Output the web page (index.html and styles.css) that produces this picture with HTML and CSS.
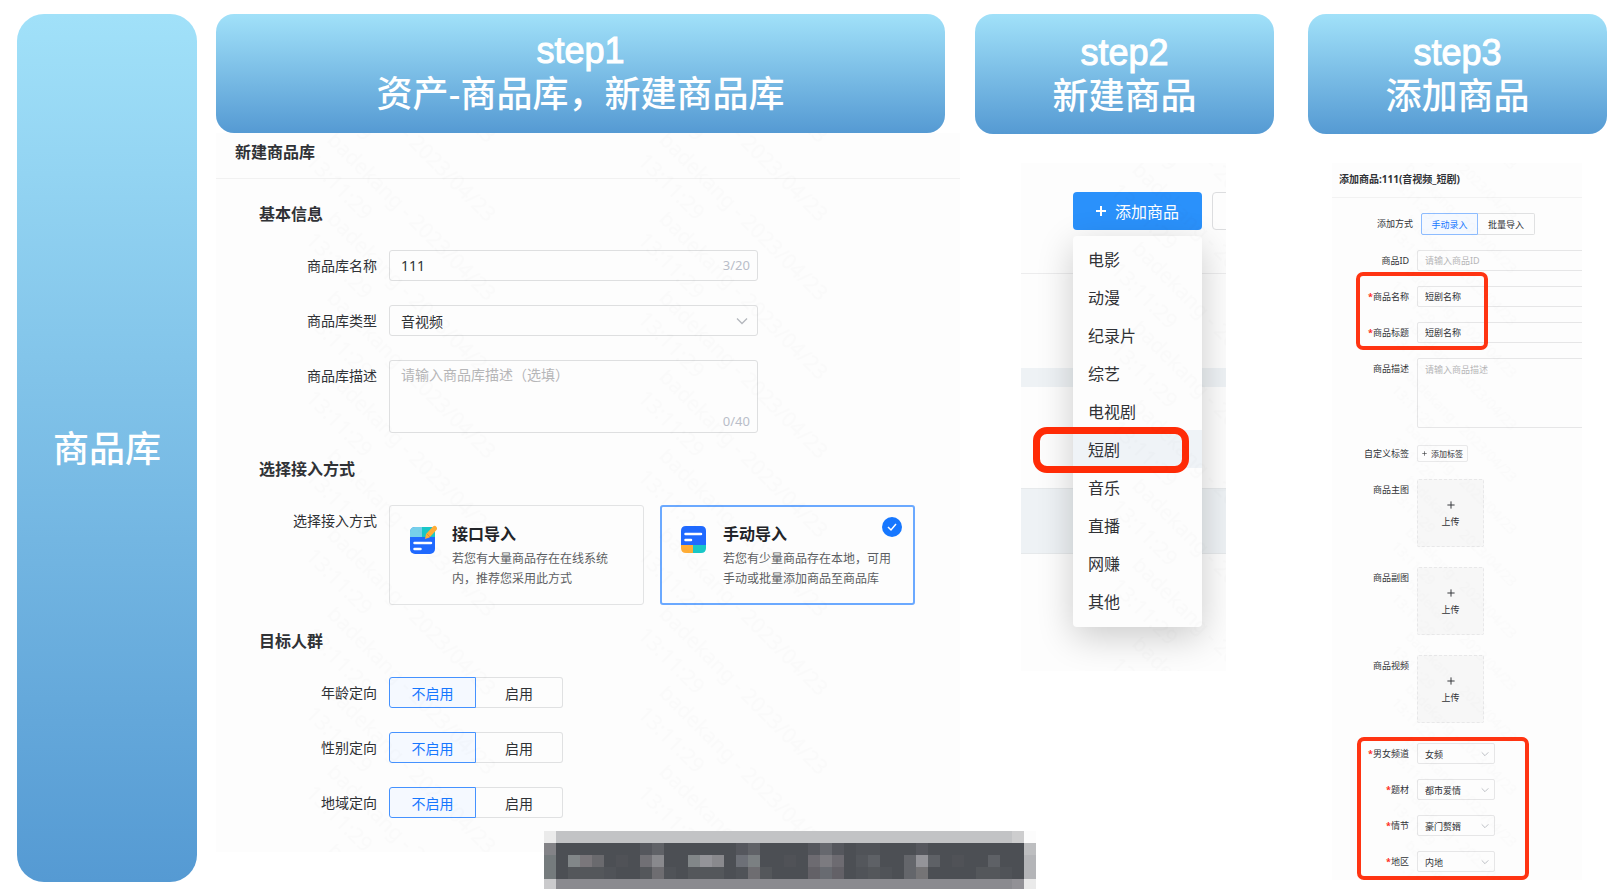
FILE: index.html
```html
<!DOCTYPE html>
<html lang="zh-CN">
<head>
<meta charset="utf-8">
<title>商品库</title>
<link rel="stylesheet" href="styles.css">
</head>
<body>
<svg class="defs" aria-hidden="true">
  <defs>
    <pattern id="mark-large" width="332" height="79" patternUnits="userSpaceOnUse">
      <g id="mark-lines" class="mark-text">
        <g transform="translate(110 -150) rotate(45)"><text>badekang - 2023/04/23</text><text x="0" y="30">13:11:29</text></g>
        <g transform="translate(110 -71) rotate(45)"><text>badekang - 2023/04/23</text><text x="0" y="30">13:11:29</text></g>
        <g transform="translate(110 8) rotate(45)"><text>badekang - 2023/04/23</text><text x="0" y="30">13:11:29</text></g>
      </g>
    </pattern>
    <pattern id="mark-small" width="332" height="79" patternUnits="userSpaceOnUse" patternTransform="scale(0.66)">
      <use href="#mark-lines"/>
    </pattern>
    <symbol id="chevron" viewBox="0 0 12 8"><path d="M1 1.5 6 6.5 11 1.5" fill="none" stroke="#b4b7bd" stroke-width="1.3"/></symbol>
    <symbol id="plus" viewBox="0 0 10 10"><path d="M5 0V10M0 5H10" fill="none" stroke="currentColor" stroke-width="2"/></symbol>
    <symbol id="plus-thin" viewBox="0 0 10 10"><path d="M5 0.5V9.5M0.5 5H9.5" fill="none" stroke="currentColor" stroke-width="1.2"/></symbol>
  </defs>
</svg>

<main class="board">
  <aside class="pillar">商品库</aside>

  <section class="step step-library">
    <header class="step-head"><span class="latin">step1</span><span>资产-商品库，新建商品库</span></header>
    <form class="panel library">
      <h1 class="library-title">新建商品库</h1>
      <div class="library-body">
        <h2>基本信息</h2>
        <div class="row">
          <label for="lib-name">商品库名称</label>
          <div class="box"><input id="lib-name" type="text" value="111"><span class="count">3/20</span></div>
        </div>
        <div class="row">
          <label for="lib-type">商品库类型</label>
          <div class="box"><select id="lib-type"><option>音视频</option></select><svg class="arrow"><use href="#chevron"/></svg></div>
        </div>
        <div class="row">
          <label for="lib-desc">商品库描述</label>
          <div class="box box-area"><textarea id="lib-desc" placeholder="请输入商品库描述（选填）"></textarea><span class="count">0/40</span></div>
        </div>

        <h2>选择接入方式</h2>
        <div class="row">
          <span class="name">选择接入方式</span>
          <div class="cards">
            <button type="button" class="card">
              <svg class="card-icon" viewBox="0 0 28 30">
                <rect x="1" y="2" width="25" height="27" rx="5" fill="#1f69ff"/>
                <path d="M6 2H13V12H1V7Q1 2 6 2Z" fill="#76cfea"/>
                <path d="M13 2H21Q26 2 26 7V12H13Z" fill="#18c7c7"/>
                <path d="M16 14 17 9 24 1.500Q26 0 27.500 2T27 5.500L20.500 12.500Z" fill="#ffad36"/>
                <path d="M18 9 21 12" stroke="#e98b32"/>
                <path d="M5.500 18H22M5.500 24H11.500" stroke="#fff" stroke-width="2.500" stroke-linecap="round"/>
              </svg>
              <span class="card-text"><strong>接口导入</strong><span>若您有大量商品存在在线系统内，推荐您采用此方式</span></span>
            </button>
            <button type="button" class="card card-on">
              <svg class="card-icon" viewBox="0 0 28 30">
                <path d="M6 1H21Q26 1 26 6V20H1V6Q1 1 6 1Z" fill="#1f69ff"/>
                <path d="M1 20H13V28H6Q1 28 1 23Z" fill="#ffad36"/>
                <path d="M13 20H26V23Q26 28 21 28H13Z" fill="#18c7c7"/>
                <path d="M5.500 9H21M5.500 15H11" stroke="#fff" stroke-width="2.500" stroke-linecap="round"/>
              </svg>
              <span class="card-text"><strong>手动导入</strong><span>若您有少量商品存在本地，可用手动或批量添加商品至商品库</span></span>
              <svg class="check" viewBox="0 0 20 20"><circle cx="10" cy="10" r="10" fill="#1677ff"/><path d="M6 10 9 13 14 7" fill="none" stroke="#fff" stroke-width="1.500"/></svg>
            </button>
          </div>
        </div>

        <h2>目标人群</h2>
        <div class="row"><span class="name">年龄定向</span><div class="toggle"><button type="button" class="on">不启用</button><button type="button">启用</button></div></div>
        <div class="row"><span class="name">性别定向</span><div class="toggle"><button type="button" class="on">不启用</button><button type="button">启用</button></div></div>
        <div class="row"><span class="name">地域定向</span><div class="toggle"><button type="button" class="on">不启用</button><button type="button">启用</button></div></div>
      </div>
      <svg class="mark" aria-hidden="true"><rect width="100%" height="100%" fill="url(#mark-large)"/></svg>
    </form>
  </section>

  <section class="step step-create">
    <header class="step-head"><span class="latin">step2</span><span>新建商品</span></header>
    <div class="panel create">
      <div class="toolbar"><button type="button" class="add"><svg class="add-icon"><use href="#plus"/></svg>添加商品</button><button type="button" class="more" aria-label="更多"></button></div>
      <div class="table-bg"><i></i><i class="band"></i><i></i><i class="band band-tall"></i></div>
      <ul class="menu">
        <li><button type="button">电影</button></li>
        <li><button type="button">动漫</button></li>
        <li><button type="button">纪录片</button></li>
        <li><button type="button">综艺</button></li>
        <li><button type="button">电视剧</button></li>
        <li class="picked"><button type="button">短剧</button></li>
        <li><button type="button">音乐</button></li>
        <li><button type="button">直播</button></li>
        <li><button type="button">网赚</button></li>
        <li><button type="button">其他</button></li>
      </ul>
      <svg class="mark" aria-hidden="true"><rect width="100%" height="100%" fill="url(#mark-large)"/></svg>
    </div>
  </section>

  <section class="step step-product">
    <header class="step-head"><span class="latin">step3</span><span>添加商品</span></header>
    <form class="panel product">
      <h1 class="product-title">添加商品:111(音视频_短剧)</h1>
      <div class="product-body">
        <div class="line line-mode"><span class="name">添加方式</span><div class="toggle"><button type="button" class="on">手动录入</button><button type="button">批量导入</button></div></div>
        <div class="line"><label for="p-id">商品ID</label><input id="p-id" class="wide" type="text" placeholder="请输入商品ID"></div>
        <div class="group group-name">
          <div class="line"><label for="p-name" class="must">商品名称</label><input id="p-name" class="wide" type="text" value="短剧名称"></div>
          <div class="line"><label for="p-title" class="must">商品标题</label><input id="p-title" class="wide" type="text" value="短剧名称"></div>
        </div>
        <div class="line"><label for="p-desc">商品描述</label><textarea id="p-desc" class="wide" placeholder="请输入商品描述"></textarea></div>
        <div class="line"><span class="name">自定义标签</span><button type="button" class="tag"><svg><use href="#plus-thin"/></svg>添加标签</button></div>
        <div class="line line-upload"><span class="name">商品主图</span><button type="button" class="upload"><svg><use href="#plus-thin"/></svg>上传</button></div>
        <div class="line line-upload"><span class="name">商品副图</span><button type="button" class="upload"><svg><use href="#plus-thin"/></svg>上传</button></div>
        <div class="line line-upload"><span class="name">商品视频</span><button type="button" class="upload"><svg><use href="#plus-thin"/></svg>上传</button></div>
        <div class="group group-kind">
          <div class="line"><label for="k1" class="must">男女频道</label><div class="pick"><select id="k1"><option>女频</option></select><svg class="arrow"><use href="#chevron"/></svg></div></div>
          <div class="line"><label for="k2" class="must">题材</label><div class="pick"><select id="k2"><option>都市爱情</option></select><svg class="arrow"><use href="#chevron"/></svg></div></div>
          <div class="line"><label for="k3" class="must">情节</label><div class="pick"><select id="k3"><option>豪门赘婿</option></select><svg class="arrow"><use href="#chevron"/></svg></div></div>
          <div class="line"><label for="k4" class="must">地区</label><div class="pick"><select id="k4"><option>内地</option></select><svg class="arrow"><use href="#chevron"/></svg></div></div>
        </div>
      </div>
      <svg class="mark" aria-hidden="true"><rect width="100%" height="100%" fill="url(#mark-small)"/></svg>
    </form>
  </section>

  <svg class="mosaic" viewBox="0 0 492 58" shape-rendering="crispEdges" aria-hidden="true">
    <path fill="#ebebeb" d="M0 0h12v12H0z"/><path fill="#c2c3c5" d="M12 0h456v12H12z"/><path fill="#cdcdce" d="M468 0h12v12h-12z"/><path fill="#fcfcfc" d="M480 0h12v12h-12z"/>
    <path fill="#4c4f54" d="M12 12h468v36H12z"/>
    <path fill="#838387" d="M0 12h12v12H0z"/><path fill="#757b7d" d="M0 24h12v24H0z"/><path fill="#bdbec0" d="M480 12h12v12h-12z"/><path fill="#b4b5b8" d="M480 24h12v24h-12z"/>
    <path fill="#cacacc" d="M0 48h12v10H0z"/><path fill="#8a8a8f" d="M12 48h456v10H12z"/><path fill="#929196" d="M468 48h12v10h-12z"/><path fill="#eaeaea" d="M480 48h12v10h-12z"/>
    <path fill="#55575d" d="M96 12h12v12H96zM192 12h12v12h-12zM264 12h12v12h-12zM288 12h12v12h-12zM372 12h12v12h-12z"/>
    <path fill="#606267" d="M108 12h12v12h-12zM204 12h12v12h-12z"/><path fill="#66686e" d="M276 12h12v12h-12z"/><path fill="#505358" d="M312 12h24v12h-24z"/>
    <path fill="#828789" d="M24 24h12v12H24zM144 24h12v12h-12z"/><path fill="#7a777b" d="M36 24h12v12H36z"/><path fill="#6a6a6e" d="M48 24h12v12H48z"/>
    <path fill="#505257" d="M72 24h12v12H72zM240 24h12v12h-12zM408 24h12v12h-12z"/>
    <path fill="#717075" d="M96 24h12v12H96z"/><path fill="#89898d" d="M108 24h12v12h-12zM168 24h12v12h-12z"/><path fill="#949499" d="M156 24h12v12h-12zM372 24h12v12h-12z"/>
    <path fill="#6d7077" d="M192 24h12v12h-12z"/><path fill="#7b8082" d="M204 24h12v12h-12z"/><path fill="#6d6b71" d="M264 24h12v12h-12zM288 24h12v12h-12z"/><path fill="#7c7b80" d="M276 24h12v12h-12z"/>
    <path fill="#54575c" d="M312 24h12v12h-12z"/><path fill="#5e6166" d="M324 24h12v12h-12zM384 24h12v12h-12zM444 24h12v12h-12z"/><path fill="#64666b" d="M360 24h12v24h-12z"/>
    <path fill="#54575b" d="M24 36h36v12H24zM96 36h12v12H96zM144 36h36v12h-36zM216 36h12v12h-12zM324 36h12v12h-12zM432 36h24v12h-24z"/>
    <path fill="#505358" d="M60 36h12v12H60zM120 36h12v12h-12zM192 36h12v12h-12zM312 36h12v12h-12zM336 36h12v12h-12zM456 36h12v12h-12z"/>
    <path fill="#6e6d71" d="M108 36h12v12h-12zM204 36h12v12h-12z"/><path fill="#636167" d="M264 36h12v12h-12zM288 36h12v12h-12z"/><path fill="#686b71" d="M276 36h12v12h-12z"/><path fill="#757476" d="M372 36h12v12h-12z"/>
  </svg>
</main>
</body>
</html>
```

FILE: styles.css
```css
* {
  box-sizing: border-box;
}

body {
  margin: 0;
  background: #fff;
  color: #303236;
  font-family: "Liberation Sans", "Noto Sans CJK SC", sans-serif;
  font-size: 14px;
}

h1,
h2,
ul {
  margin: 0;
  padding: 0;
}

button,
input,
select,
textarea {
  margin: 0;
  padding: 0;
  border: 0;
  background: none;
  color: inherit;
  font: inherit;
}

select {
  appearance: none;
}

textarea {
  display: block;
  resize: none;
}

::placeholder {
  color: #b6b6b8;
  opacity: 1;
}

.defs {
  position: absolute;
  width: 0;
  height: 0;
}

.board {
  position: relative;
  display: flex;
  align-items: stretch;
  min-height: 100vh;
  padding: 14px 6px 10px 17px;
}

.pillar {
  flex: 180 1 0;
  display: flex;
  align-items: center;
  justify-content: center;
  padding-bottom: 4px;
  border-radius: 27px;
  background: linear-gradient(#a1e1f9, #559ad3);
  color: #fff;
  font-size: 36px;
  font-weight: 500;
}

.step-library {
  flex: 744 1 0;
  margin-left: 19px;
}

.step-create {
  flex: 299 1 0;
  margin-left: 15px;
}

.step-product {
  flex: 299 1 0;
  margin-left: 34px;
}

.step {
  min-width: 0;
}

.step-head {
  display: flex;
  flex-direction: column;
  align-items: center;
  justify-content: center;
  min-height: 120px;
  padding-top: 2px;
  border-radius: 18px;
  background: linear-gradient(#a1e1f9, #559ad3);
  color: #fff;
  font-size: 36px;
  font-weight: 500;
  line-height: 44px;
}

.step-library .step-head {
  min-height: 119px;
  margin-right: 15px;
  padding-bottom: 3px;
}

.latin {
  -webkit-text-stroke: 1px #fff;
}

.panel {
  position: relative;
  overflow: hidden;
  background: #fdfdfd;
  font-family: "Noto Sans", "Noto Sans CJK SC", sans-serif;
}

.mark {
  position: absolute;
  inset: 0;
  width: 100%;
  height: 100%;
  pointer-events: none;
}

.mark-text {
  fill: #000;
  fill-opacity: 0.011;
  font-family: "Noto Sans", sans-serif;
  font-size: 21px;
}

/* Library form */

.library {
  padding-bottom: 34px;
}

.library-title {
  padding: 7px 19px 14px;
  border-bottom: 1px solid #f1f1f1;
  font-size: 16px;
  font-weight: 700;
  line-height: 24px;
}

.library-body {
  display: flex;
  flex-direction: column;
  gap: 24px;
  padding-top: 23px;
}

.library-body h2 {
  padding-left: 43px;
  font-size: 16px;
  font-weight: 700;
  line-height: 24px;
}

.row {
  display: grid;
  grid-template-columns: 161px 1fr;
  column-gap: 12px;
  line-height: 31px;
}

.row > label,
.row > .name {
  text-align: right;
}

.box {
  position: relative;
  display: flex;
  max-width: 369px;
  height: 31px;
  border: 1px solid #dedfe0;
  border-radius: 3px;
}

.box input,
.box select,
.box textarea {
  flex: 1;
  min-width: 0;
  padding: 0 11px;
}

.box-area {
  flex-direction: column;
  height: 73px;
}

.box-area textarea {
  padding-top: 4px;
  line-height: 20px;
}

.count {
  padding-right: 7px;
  color: #b9bdc9;
  font-size: 13px;
  line-height: 29px;
  text-align: right;
}

.box-area .count {
  line-height: 22px;
}

.arrow {
  position: absolute;
  top: 50%;
  right: 9px;
  width: 12px;
  height: 8px;
  margin-top: -4px;
  pointer-events: none;
}

.cards {
  display: flex;
  gap: 16px;
}

.card {
  position: relative;
  display: flex;
  align-items: flex-start;
  gap: 15px;
  width: 255px;
  height: 100px;
  padding: 16px 18px 0 19px;
  border: 1px solid #e2e3e4;
  border-radius: 3px;
  text-align: left;
}

.card-on {
  border: 2px solid #6ba9ff;
  padding: 15px 17px 0 18px;
}

.card-icon {
  flex: none;
  width: 28px;
  height: 30px;
  margin-top: 3px;
}

.card-text {
  display: flex;
  flex-direction: column;
  gap: 3px;
  color: #5c5e62;
  font-size: 12px;
  line-height: 20px;
}

.card-text strong {
  color: #222428;
  font-size: 16px;
  line-height: 24px;
}

.check {
  position: absolute;
  top: 10px;
  right: 11px;
  width: 20px;
  height: 20px;
}

.toggle {
  display: flex;
}

.toggle button {
  width: 87px;
  height: 31px;
  border: 1px solid #e0e1e2;
  border-left: 0;
  border-radius: 0 3px 3px 0;
}

.toggle .on {
  border: 1px solid #4592ff;
  border-radius: 3px 0 0 3px;
  background: #f5f9ff;
  color: #1677ff;
}

/* Product type menu */

.create {
  height: 508px;
  margin: 29px 48px 0 46px;
}

.toolbar {
  display: flex;
  gap: 10px;
  padding: 29px 0 0 52px;
}

.add {
  display: flex;
  flex: none;
  align-items: center;
  justify-content: center;
  gap: 9px;
  width: 129px;
  height: 38px;
  border-radius: 4px;
  background: #2a91fb;
  color: #fff;
  font-size: 16px;
}

.add-icon {
  width: 10px;
  height: 10px;
}

.more {
  flex: none;
  width: 60px;
  height: 38px;
  border: 1px solid #dcdddf;
  border-radius: 4px;
}

.table-bg {
  display: grid;
  grid-template-rows: 94px 19px 101px 66px;
  margin-top: 43px;
  border-top: 1px solid #ececed;
}

.band {
  background: #eef2f5;
}

.band-tall {
  border-top: 1px solid #e6e9eb;
  border-bottom: 1px solid #e6e9eb;
}

.menu {
  position: absolute;
  top: 73px;
  left: 52px;
  width: 129px;
  padding: 4px 0 7px;
  border-radius: 4px;
  background: #fdfdfd;
  box-shadow: 0 10px 36px rgba(0, 0, 0, 0.2);
  font-size: 16px;
  list-style: none;
}

.menu button {
  display: block;
  width: 100%;
  height: 38px;
  padding-left: 15px;
  text-align: left;
}

.picked {
  position: relative;
  background: #eff3f7;
}

.picked::after {
  content: "";
  position: absolute;
  inset: -3px 13px -5px -40px;
  border: 7px solid #ff2b06;
  border-radius: 14px;
}

/* Product form */

.product {
  margin: 29px 25px 0 24px;
  padding-bottom: 8px;
  font-size: 9px;
}

.product-title {
  padding: 8px 7px 10px;
  border-bottom: 1px solid #f2f2f2;
  font-size: 10px;
  font-weight: 700;
  line-height: 16px;
}

.product-body,
.group {
  display: flex;
  flex-direction: column;
  gap: 15px;
}

.product-body {
  padding-top: 15px;
}

.line {
  display: grid;
  grid-template-columns: 77px 1fr;
  column-gap: 8px;
  line-height: 21px;
}

.line > label,
.line > .name {
  text-align: right;
}

.line-mode {
  grid-template-columns: 81px 1fr;
}

.line .toggle button {
  width: 57px;
  height: 22px;
  border-radius: 0 2px 2px 0;
}

.line .toggle .on {
  border-color: #8dbcff;
  border-radius: 2px 0 0 2px;
}

.must::before {
  content: "*";
  color: #ff2b20;
  font-weight: 700;
}

.wide {
  min-width: 0;
  height: 21px;
  margin-right: -4px;
  padding: 0 7px;
  border: 1px solid #e6e6e7;
  border-radius: 2px;
}

textarea.wide {
  height: 70px;
}

.tag {
  display: flex;
  align-items: center;
  justify-content: center;
  align-self: center;
  gap: 4px;
  width: 51px;
  height: 17px;
  border: 1px solid #e9e9ea;
  border-radius: 2px;
  font-size: 8px;
}

.tag svg {
  width: 5px;
  height: 5px;
}

.line-upload {
  margin-bottom: 5px;
}

.upload {
  display: flex;
  flex-direction: column;
  align-items: center;
  justify-content: center;
  gap: 6px;
  width: 67px;
  height: 68px;
  padding-top: 3px;
  border: 1px dashed #e8e8e9;
  border-radius: 2px;
  background: #f7f7f7;
  line-height: 13px;
}

.upload svg {
  width: 8px;
  height: 8px;
}

.pick {
  position: relative;
  width: 78px;
}

.pick select {
  display: block;
  width: 100%;
  height: 21px;
  padding: 0 7px;
  border: 1px solid #e6e6e7;
  border-radius: 2px;
}

.pick .arrow {
  right: 6px;
  width: 8px;
  height: 6px;
  margin-top: -3px;
}

.group {
  position: relative;
}

.group::after {
  content: "";
  position: absolute;
  border: 4px solid #ff3412;
  border-radius: 7px;
  pointer-events: none;
}

.group-name::after {
  inset: -14px 94px -7px 24px;
}

.group-kind::after {
  inset: -6px 53px -8px 25px;
}

/* Pixelated strip over the lower edge */

.mosaic {
  position: absolute;
  bottom: 3px;
  left: 544px;
  width: 492px;
  height: 58px;
}
```
